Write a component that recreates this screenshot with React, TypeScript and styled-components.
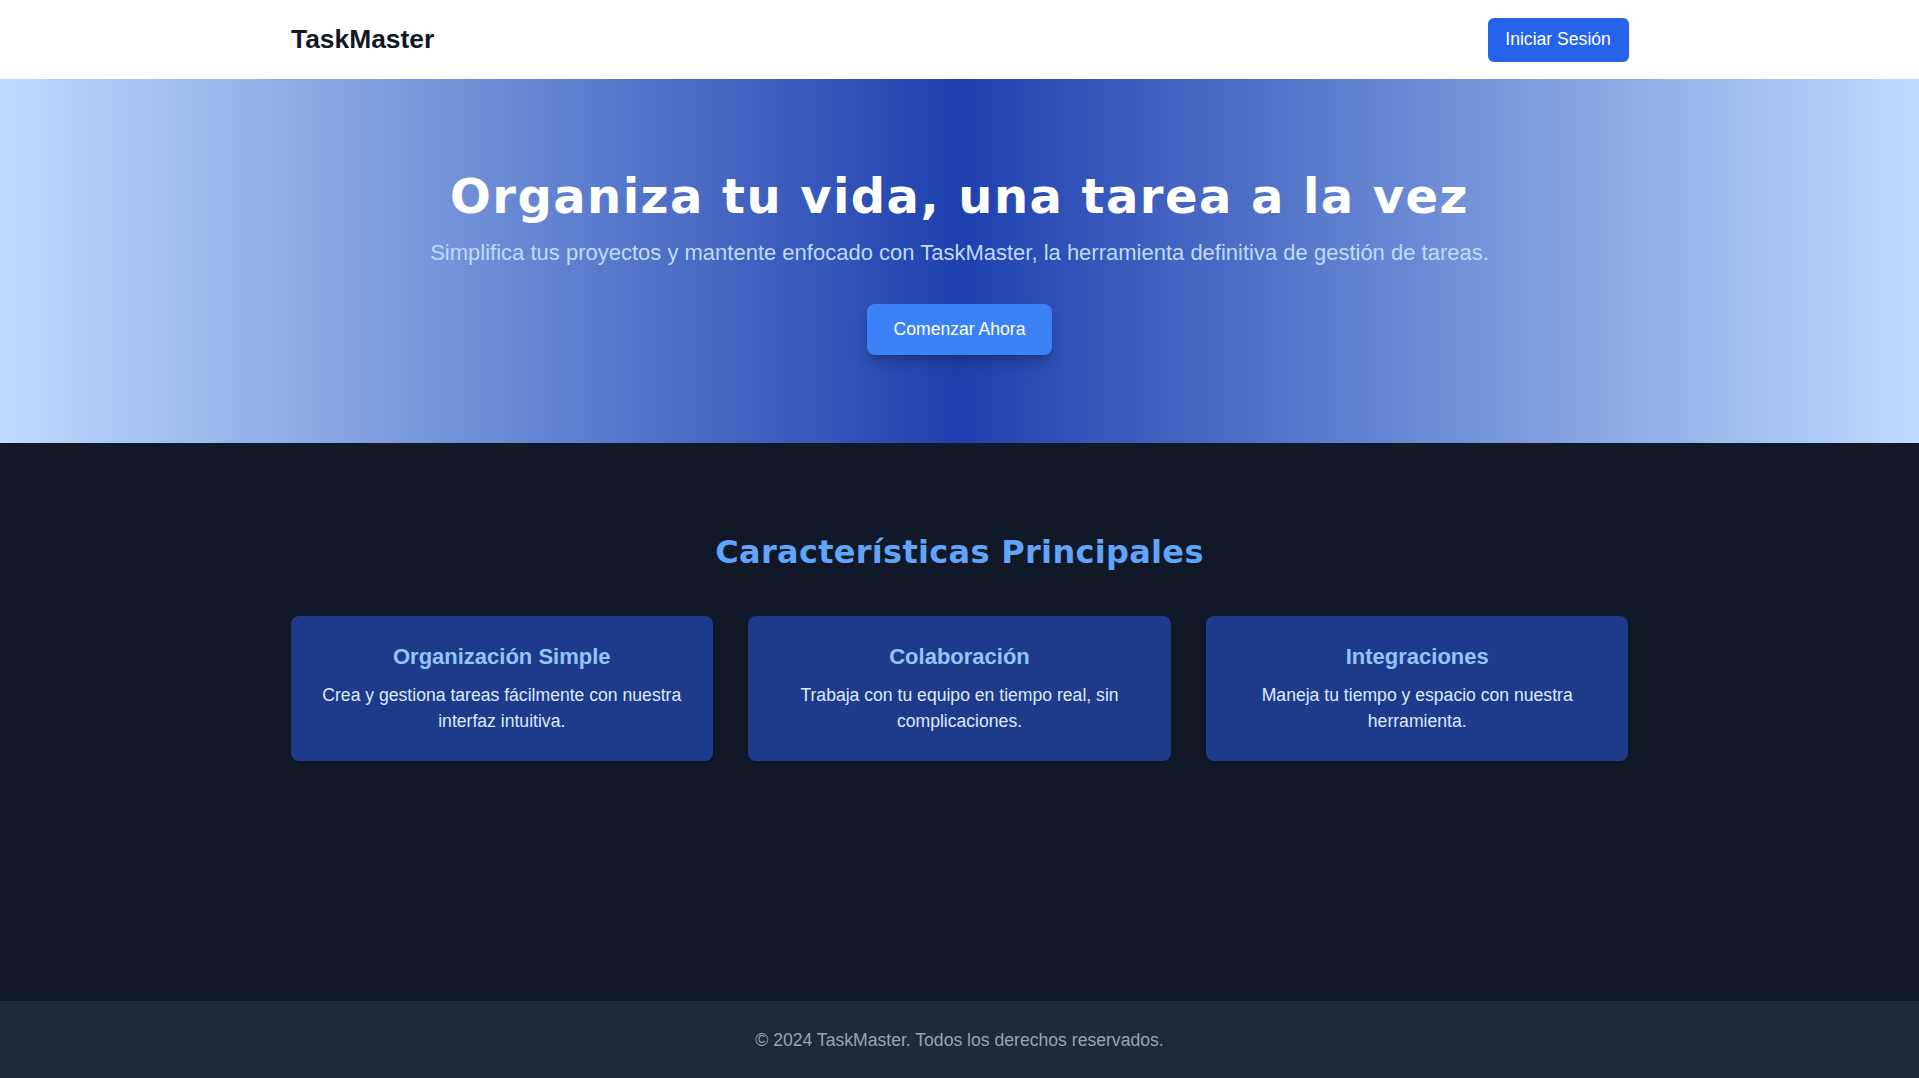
import React from "react";
import styled, { createGlobalStyle } from "styled-components";

const GlobalStyle = createGlobalStyle`
  html, body {
    margin: 0;
    padding: 0;
  }
  body {
    font-family: "Liberation Sans", Arial, sans-serif;
    font-size: 17.6px;
    background: #111827;
    color: #111827;
  }
  * { box-sizing: border-box; }
`;

const Page = styled.div`
  min-height: 100vh;
  display: flex;
  flex-direction: column;
`;

const Container = styled.div`
  width: 100%;
  max-width: 1338px;
  margin: 0 auto;
`;

const Header = styled.header`
  background: #ffffff;
  padding: 17.6px 0;
`;

const HeaderInner = styled(Container)`
  display: flex;
  align-items: center;
  justify-content: space-between;
`;

const Logo = styled.div`
  font-size: 26.4px;
  font-weight: 700;
  color: #111827;
  line-height: 1.2;
  padding-left: 0.5px;
`;

const LoginButton = styled.button`
  font-family: inherit;
  font-size: 17.6px;
  line-height: 26.4px;
  padding: 8.8px 17.6px;
  background: #2563eb;
  color: #ffffff;
  border: none;
  border-radius: 6px;
  cursor: pointer;
`;

const Hero = styled.section`
  background: linear-gradient(to right, #bfdbfe, #1e40af, #bfdbfe);
  padding: 88.4px 0 88.3px;
  text-align: center;
  display: flex;
  flex-direction: column;
  align-items: center;
`;

const HeroTitle = styled.h1`
  margin: 0;
  font-family: "DejaVu Sans", "Liberation Sans", sans-serif;
  font-weight: 700;
  font-size: 48px;
  line-height: 57.6px;
  letter-spacing: 1.45px;
  color: #ffffff;
`;

const HeroSubtitle = styled.p`
  margin: 14px 0 0;
  font-size: 22px;
  line-height: 28px;
  color: #bfdbfe;
`;

const CTAButton = styled.button`
  margin-top: 36.6px;
  font-family: inherit;
  font-size: 17.6px;
  line-height: 26.4px;
  padding: 12.3px 26.4px;
  background: #3b82f6;
  color: #ffffff;
  border: none;
  border-radius: 8px;
  box-shadow: 0 10px 15px -3px rgba(0, 0, 0, 0.22), 0 4px 6px -4px rgba(0, 0, 0, 0.2);
  cursor: pointer;
`;

const Features = styled.section`
  flex: 1;
  background: #111827;
  padding: 89.7px 0 240px;
`;

const SectionTitle = styled.h2`
  margin: 0 0 45px;
  text-align: center;
  font-family: "DejaVu Sans", "Liberation Sans", sans-serif;
  font-weight: 700;
  font-size: 32px;
  line-height: 38.4px;
  letter-spacing: 0.3px;
  color: #60a5fa;
`;

const Grid = styled(Container)`
  display: grid;
  grid-template-columns: repeat(3, 1fr);
  gap: 35.2px;
`;

const Card = styled.div`
  background: #1e3a8a;
  border-radius: 8px;
  padding: 26.4px;
  text-align: center;
  box-shadow: 0 4px 6px -1px rgba(0, 0, 0, 0.1), 0 2px 4px -2px rgba(0, 0, 0, 0.1);
`;

const CardTitle = styled.h3`
  margin: 0 0 12px;
  font-size: 22px;
  line-height: 28.7px;
  font-weight: 700;
  color: #93c5fd;
`;

const CardText = styled.p`
  margin: 0;
  font-size: 17.6px;
  line-height: 25.6px;
  color: #dbeafe;
`;

const Footer = styled.footer`
  background: #1f2937;
  padding: 25.5px 0 25px;
  text-align: center;
`;

const FooterText = styled.p`
  margin: 0;
  font-size: 17.6px;
  line-height: 26.4px;
  color: #9ca3af;
`;

const features = [
  {
    title: "Organización Simple",
    text: "Crea y gestiona tareas fácilmente con nuestra interfaz intuitiva.",
  },
  {
    title: "Colaboración",
    text: "Trabaja con tu equipo en tiempo real, sin complicaciones.",
  },
  {
    title: "Integraciones",
    text: "Maneja tu tiempo y espacio con nuestra herramienta.",
  },
];

export default function App() {
  return (
    <>
      <GlobalStyle />
      <Page>
        <Header>
          <HeaderInner>
            <Logo>TaskMaster</Logo>
            <LoginButton>Iniciar Sesión</LoginButton>
          </HeaderInner>
        </Header>
        <Hero>
          <HeroTitle>Organiza tu vida, una tarea a la vez</HeroTitle>
          <HeroSubtitle>
            Simplifica tus proyectos y mantente enfocado con TaskMaster, la herramienta definitiva de gestión de tareas.
          </HeroSubtitle>
          <CTAButton>Comenzar Ahora</CTAButton>
        </Hero>
        <Features>
          <SectionTitle>Características Principales</SectionTitle>
          <Grid>
            {features.map((f) => (
              <Card key={f.title}>
                <CardTitle>{f.title}</CardTitle>
                <CardText>{f.text}</CardText>
              </Card>
            ))}
          </Grid>
        </Features>
        <Footer>
          <FooterText>© 2024 TaskMaster. Todos los derechos reservados.</FooterText>
        </Footer>
      </Page>
    </>
  );
}
